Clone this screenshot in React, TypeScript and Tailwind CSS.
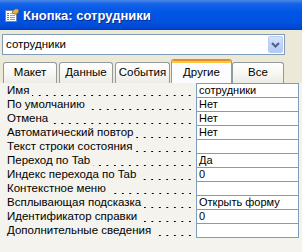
import React from 'react';

const rows: [string, string][] = [
  ['Имя', 'сотрудники'],
  ['По умолчанию', 'Нет'],
  ['Отмена', 'Нет'],
  ['Автоматический повтор', 'Нет'],
  ['Текст строки состояния', ''],
  ['Переход по Tab', 'Да'],
  ['Индекс перехода по Tab', '0'],
  ['Контекстное меню', ''],
  ['Всплывающая подсказка', 'Открыть форму'],
  ['Идентификатор справки', '0'],
  ['Дополнительные сведения', ''],
];

function Tab({ label, width, ml }: { label: string; width: string; ml: string }) {
  return (
    <div
      className={`${width} ${ml} h-[21px] border border-b-0 border-[#919b9c] rounded-t-[3px] bg-[linear-gradient(180deg,#ffffff_0%,#f7f7f4_50%,#ecebe5_100%)] flex items-center justify-center text-[11.5px] leading-none`}
    >
      {label}
    </div>
  );
}

export default function App() {
  return (
    <div className="w-[302px] h-[252px] overflow-hidden bg-[#ece9d8] font-['Liberation_Sans',Arial,sans-serif] text-black">
      {/* Title bar */}
      <div className="h-[30px] flex items-center pl-[5px] gap-[4px] bg-[linear-gradient(180deg,#4a88e6_0px,#1462e8_4px,#0056e6_12px,#0052e0_22px,#0046d2_28px,#003cc4_30px)]">
        <svg width="14" height="14" viewBox="0 0 14 14" className="shrink-0">
          <rect x="0.5" y="2.5" width="11" height="11" fill="#ffffff" stroke="#6f86ad" />
          <rect x="2" y="5" width="2" height="1" fill="#5a77b0" />
          <rect x="5" y="5" width="5" height="1" fill="#8aa0c8" />
          <rect x="2" y="7" width="2" height="1" fill="#5a77b0" />
          <rect x="5" y="7" width="5" height="1" fill="#8aa0c8" />
          <rect x="2" y="9" width="2" height="1" fill="#5a77b0" />
          <rect x="5" y="9" width="5" height="1" fill="#8aa0c8" />
          <rect x="2" y="11" width="2" height="1" fill="#5a77b0" />
          <rect x="5" y="11" width="5" height="1" fill="#8aa0c8" />
          <path d="M7 4 L10 1 L13 1 L14 3 L12 6 L9 6 Z" fill="#e2b34a" stroke="#8a6a1e" strokeWidth="0.8" />
        </svg>
        <span className="text-white font-bold text-[13px] leading-none [text-shadow:1px_1px_0_#0a2a8a]">
          Кнопка: сотрудники
        </span>
      </div>

      {/* Object combo */}
      <div className="mt-[4px] ml-[2px] w-[283px] h-[21px] border border-[#7f9db9] bg-white flex items-center">
        <span className="flex-1 pl-[3px] text-[11.5px] leading-none">сотрудники</span>
        <div className="w-[15px] h-[17px] mr-[1px] rounded-[2px] border border-[#b9cdf4] bg-[linear-gradient(180deg,#d6e3fd_0%,#c1d3fb_50%,#b4c9f7_100%)] flex items-center justify-center">
          <svg width="9" height="6" viewBox="0 0 9 6">
            <path d="M1 1 L4.5 4.5 L8 1" fill="none" stroke="#4d6185" strokeWidth="2" />
          </svg>
        </div>
      </div>

      {/* Tabs */}
      <div className="mt-[4px] h-[24px] flex items-end pl-[3px]">
        <Tab label="Макет" width="w-[54px]" ml="ml-0" />
        <Tab label="Данные" width="w-[54px]" ml="ml-[2px]" />
        <Tab label="События" width="w-[55px]" ml="ml-[2px]" />
        <div className="ml-[1px] w-[61px] h-[24px] border border-b-0 border-[#919b9c] rounded-t-[3px] overflow-hidden bg-[#fcfcfe] flex flex-col">
          <div className="h-[1px] bg-[#e68b2c]" />
          <div className="h-[2px] bg-[#ffc83c]" />
          <div className="flex-1 flex items-center justify-center text-[11.5px] leading-none">Другие</div>
        </div>
        <Tab label="Все" width="w-[52px]" ml="ml-0" />
      </div>

      {/* Property grid */}
      <div className="h-[169px] bg-[#f4f3ee]">
        {rows.map(([label, value], i) => (
          <div key={label} className="flex h-[14px]">
            <div className="w-[196px] flex pl-[7px] pr-[5px] text-[11.5px] leading-[15px] whitespace-nowrap">
              <span>{label}</span>
              <span className="flex-1 min-w-0 ml-[3px] bg-[linear-gradient(to_right,transparent_6px,#000_6px)] bg-[length:7.5px_1px] bg-repeat-x bg-[position:right_bottom_1px]" />
            </div>
            <div
              className={`w-[103px] bg-white border-l border-r border-t border-[#7f9db9] ${i === rows.length - 1 ? 'border-b h-[15px]' : ''} pl-[2px] text-[11px] leading-[13px] whitespace-nowrap overflow-hidden`}
            >
              {value}
            </div>
          </div>
        ))}
      </div>
    </div>
  );
}
